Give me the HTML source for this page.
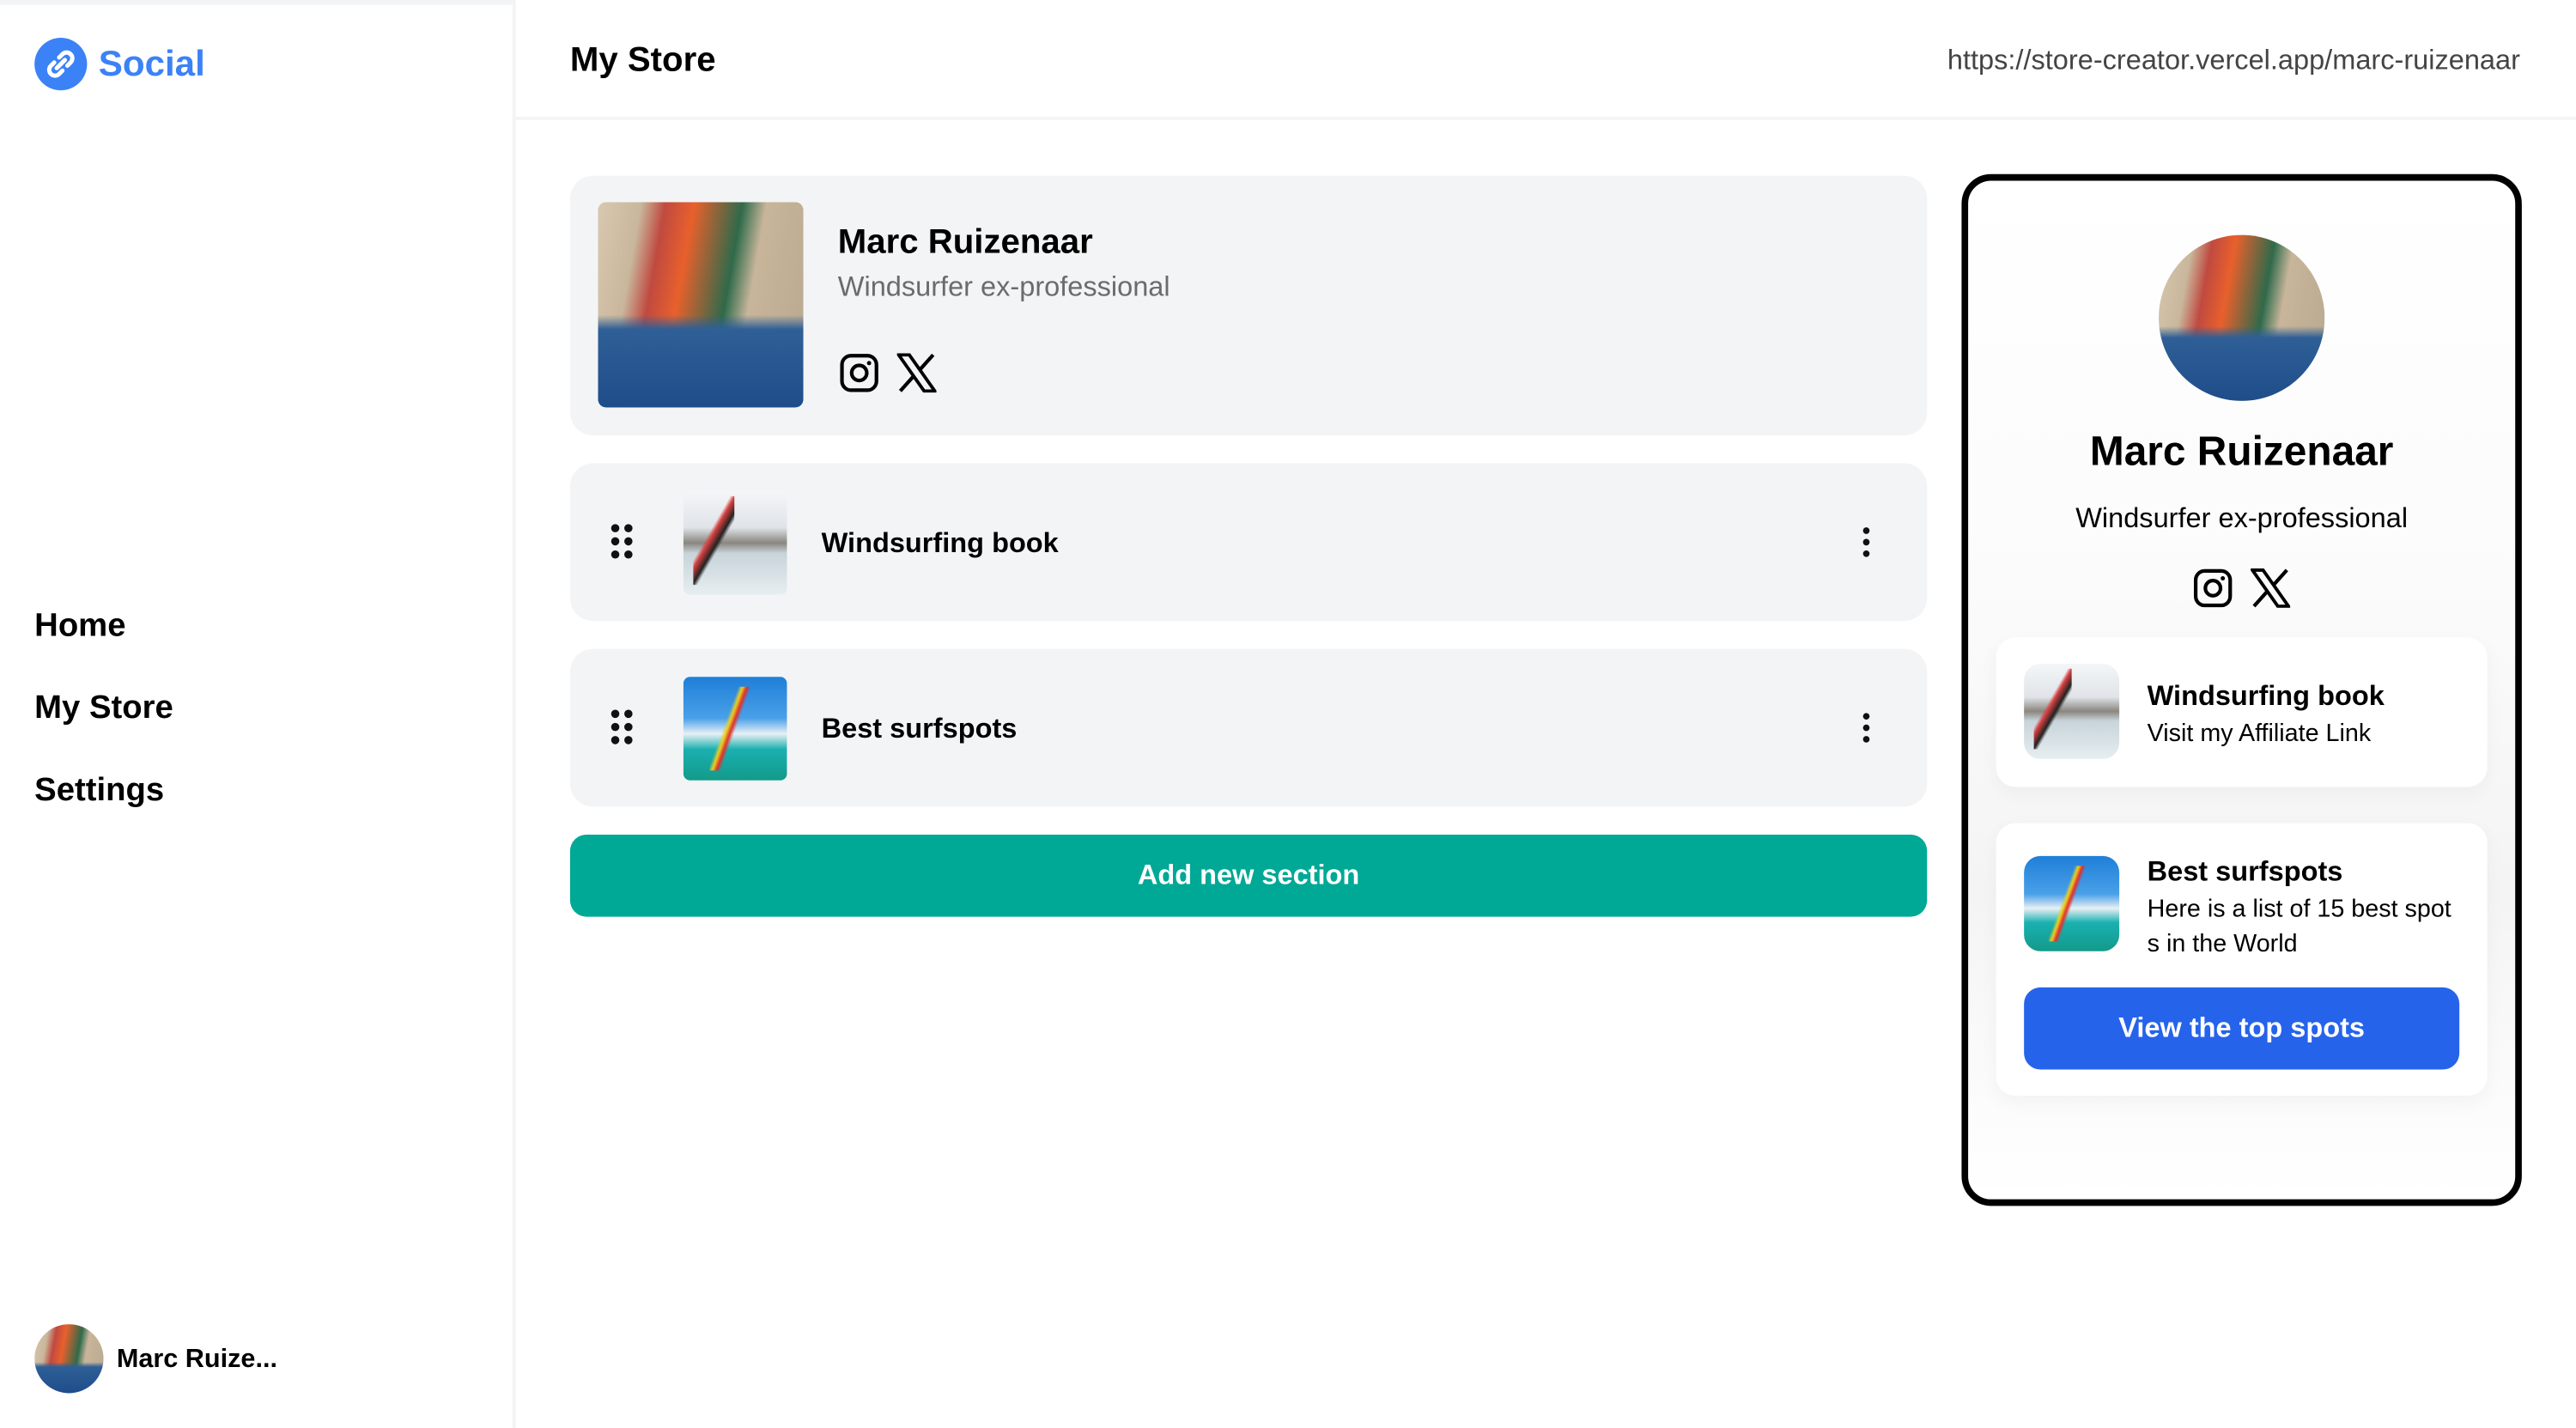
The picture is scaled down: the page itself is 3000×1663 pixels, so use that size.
<!DOCTYPE html>
<html><head><meta charset="utf-8"><style>
*{box-sizing:border-box;margin:0;padding:0}
html,body{width:3000px;height:1662px;overflow:hidden;background:#fff;font-family:"Liberation Sans",sans-serif;color:#000}
#s{position:absolute;left:0;top:0;width:1568px;height:869px;transform:scale(1.91327);transform-origin:0 0}
.a{position:absolute}
.photo2{background:linear-gradient(180deg,rgba(0,0,0,0) 0%,rgba(0,0,0,0) 55%,#2f5f96 62%,#1e4d8a 100%),linear-gradient(100deg,#d8c8b0 0%,#c9b79c 18%,#c04a40 28%,#e8602c 40%,#2f6a4a 60%,#c8b59a 70%,#b8a890 100%)}
.bookimg{background:linear-gradient(180deg,#f4f6f8 0%,#e0e4e8 35%,#8a8680 50%,#c8d4da 60%,#e6eef0 100%);overflow:hidden}
.bookimg:after{content:"";position:absolute;left:10%;top:5%;width:40%;height:85%;background:linear-gradient(120deg,transparent 40%,#d84040 45%,#222 55%,transparent 60%)}
.surfimg{background:linear-gradient(180deg,#1e7fd8 0%,#4aa0e8 40%,#e8f0f4 55%,#1ab0b0 70%,#139a8a 100%);overflow:hidden}
.surfimg:after{content:"";position:absolute;left:25%;top:10%;width:40%;height:80%;background:linear-gradient(110deg,transparent 40%,#e8d020 46%,#e03030 52%,transparent 58%)}
.card{background:#f3f4f6;border-radius:14px}
.dots{position:absolute;width:14px;height:22px}
.dots i{position:absolute;width:5px;height:5px;border-radius:50%;background:#111}
.kebab i{position:absolute;width:4px;height:4px;border-radius:50%;background:#111;left:0}
</style></head><body><div id="s">
<div class="a" style="left:0;top:0;width:312px;height:3px;background:#f3f4f6"></div>
<div class="a" style="left:312px;top:0;width:2px;height:869px;background:#f3f4f6"></div>
<div class="a" style="left:21px;top:23px;width:32px;height:32px;border-radius:50%;background:#3b82f6">
<svg width="32" height="32" viewBox="0 0 32 32"><g fill="none" stroke="#fff" stroke-width="2.6" stroke-linecap="round"><path d="M15 12l2-2a3.5 3.5 0 015 5l-2 2"/><path d="M17 20l-2 2a3.5 3.5 0 01-5-5l2-2"/><path d="M13.5 18.5l5-5"/></g></svg></div>
<div class="a" style="left:60px;top:26px;font-size:22px;font-weight:bold;color:#3b82f6">Social</div>
<div class="a" style="left:21px;top:370px;font-size:20px;font-weight:bold">Home</div>
<div class="a" style="left:21px;top:420px;font-size:20px;font-weight:bold">My Store</div>
<div class="a" style="left:21px;top:470px;font-size:20px;font-weight:bold">Settings</div>
<div class="a photo2" style="left:21px;top:806px;width:42px;height:42px;border-radius:50%"></div>
<div class="a" style="left:71px;top:819px;font-size:16px;font-weight:bold">Marc Ruize...</div>
<div class="a" style="left:347px;top:25px;font-size:21px;font-weight:bold">My Store</div>
<div class="a" style="right:34px;top:27px;font-size:17px;color:#444">https://store-creator.vercel.app/marc-ruizenaar</div>
<div class="a" style="left:314px;top:71px;width:1254px;height:2px;background:#f3f4f6"></div>
<div class="a card" style="left:347px;top:107px;width:826px;height:158px"></div>
<div class="a photo2" style="left:364px;top:123px;width:125px;height:125px;border-radius:5px"></div>
<div class="a" style="left:510px;top:136px;font-size:21px;font-weight:bold">Marc Ruizenaar</div>
<div class="a" style="left:510px;top:165px;font-size:17px;color:#6b6b6b">Windsurfer ex-professional</div>
<svg class="a" style="left:511px;top:215px" width="24" height="24" viewBox="0 0 24 24"><rect x="1.5" y="1.5" width="21" height="21" rx="5.5" fill="none" stroke="#000" stroke-width="2.2"/><circle cx="12" cy="12" r="4.6" fill="none" stroke="#000" stroke-width="2.2"/><circle cx="18" cy="6" r="1.3"/></svg>
<svg class="a" style="left:546px;top:215px" width="24" height="24" viewBox="0 0 24 24"><path d="M1 1h6.5l15.5 22h-6.5z" fill="none" stroke="#000" stroke-width="2"/><path d="M22 1L13.5 10.5M2 23l8.5-9.5" stroke="#000" stroke-width="2.2"/></svg>
<div class="a card" style="left:347px;top:282px;width:826px;height:96px"></div>
<div class="dots" style="left:372px;top:319px"><i style="left:0;top:0"></i><i style="left:8px;top:0"></i><i style="left:0;top:8px"></i><i style="left:8px;top:8px"></i><i style="left:0;top:16px"></i><i style="left:8px;top:16px"></i></div>
<div class="a bookimg" style="left:416px;top:299px;width:63px;height:63px;border-radius:4px"></div>
<div class="a" style="left:500px;top:321px;font-size:17px;font-weight:bold">Windsurfing book</div>
<div class="a kebab" style="left:1134px;top:321px;width:4px;height:18px"><i style="top:0"></i><i style="top:7px"></i><i style="top:14px"></i></div>
<div class="a card" style="left:347px;top:395px;width:826px;height:96px"></div>
<div class="dots" style="left:372px;top:432px"><i style="left:0;top:0"></i><i style="left:8px;top:0"></i><i style="left:0;top:8px"></i><i style="left:8px;top:8px"></i><i style="left:0;top:16px"></i><i style="left:8px;top:16px"></i></div>
<div class="a surfimg" style="left:416px;top:412px;width:63px;height:63px;border-radius:4px"></div>
<div class="a" style="left:500px;top:434px;font-size:17px;font-weight:bold">Best surfspots</div>
<div class="a kebab" style="left:1134px;top:434px;width:4px;height:18px"><i style="top:0"></i><i style="top:7px"></i><i style="top:14px"></i></div>
<div class="a" style="left:347px;top:508px;width:826px;height:50px;border-radius:10px;background:#00a896;color:#fff;font-size:17px;font-weight:bold;text-align:center;line-height:50px">Add new section</div>
<div class="a" style="left:1194px;top:106px;width:341px;height:628px;border:4px solid #000;border-radius:18px;background:linear-gradient(180deg,#fff 0%,#fbfbfb 40%,#f4f4f4 70%,#fff 100%)"></div>
<div class="a photo2" style="left:1314px;top:143px;width:101px;height:101px;border-radius:50%"></div>
<div class="a" style="left:1194px;width:341px;top:261px;text-align:center;font-size:25px;font-weight:bold">Marc Ruizenaar</div>
<div class="a" style="left:1194px;width:341px;top:306px;text-align:center;font-size:17px">Windsurfer ex-professional</div>
<svg class="a" style="left:1335px;top:346px" width="24" height="24" viewBox="0 0 24 24"><rect x="1.5" y="1.5" width="21" height="21" rx="5.5" fill="none" stroke="#000" stroke-width="2.2"/><circle cx="12" cy="12" r="4.6" fill="none" stroke="#000" stroke-width="2.2"/><circle cx="18" cy="6" r="1.3"/></svg>
<svg class="a" style="left:1370px;top:346px" width="24" height="24" viewBox="0 0 24 24"><path d="M1 1h6.5l15.5 22h-6.5z" fill="none" stroke="#000" stroke-width="2"/><path d="M22 1L13.5 10.5M2 23l8.5-9.5" stroke="#000" stroke-width="2.2"/></svg>
<div class="a" style="left:1215px;top:388px;width:299px;height:91px;background:#fff;border-radius:12px;box-shadow:0 4px 12px rgba(0,0,0,0.04)"></div>
<div class="a bookimg" style="left:1232px;top:404px;width:58px;height:58px;border-radius:10px"></div>
<div class="a" style="left:1307px;top:414px;font-size:17px;font-weight:bold">Windsurfing book</div>
<div class="a" style="left:1307px;top:438px;font-size:15px">Visit my Affiliate Link</div>
<div class="a" style="left:1215px;top:501px;width:299px;height:166px;background:#fff;border-radius:12px;box-shadow:0 4px 12px rgba(0,0,0,0.04)"></div>
<div class="a surfimg" style="left:1232px;top:521px;width:58px;height:58px;border-radius:10px"></div>
<div class="a" style="left:1307px;top:521px;font-size:17px;font-weight:bold">Best surfspots</div>
<div class="a" style="left:1307px;top:543px;width:190px;font-size:15px;line-height:21px;word-break:break-all">Here is a list of 15 best spots in the World</div>
<div class="a" style="left:1232px;top:601px;width:265px;height:50px;border-radius:10px;background:#2563eb;color:#fff;font-size:17px;font-weight:bold;text-align:center;line-height:50px">View the top spots</div>
</div></body></html>
